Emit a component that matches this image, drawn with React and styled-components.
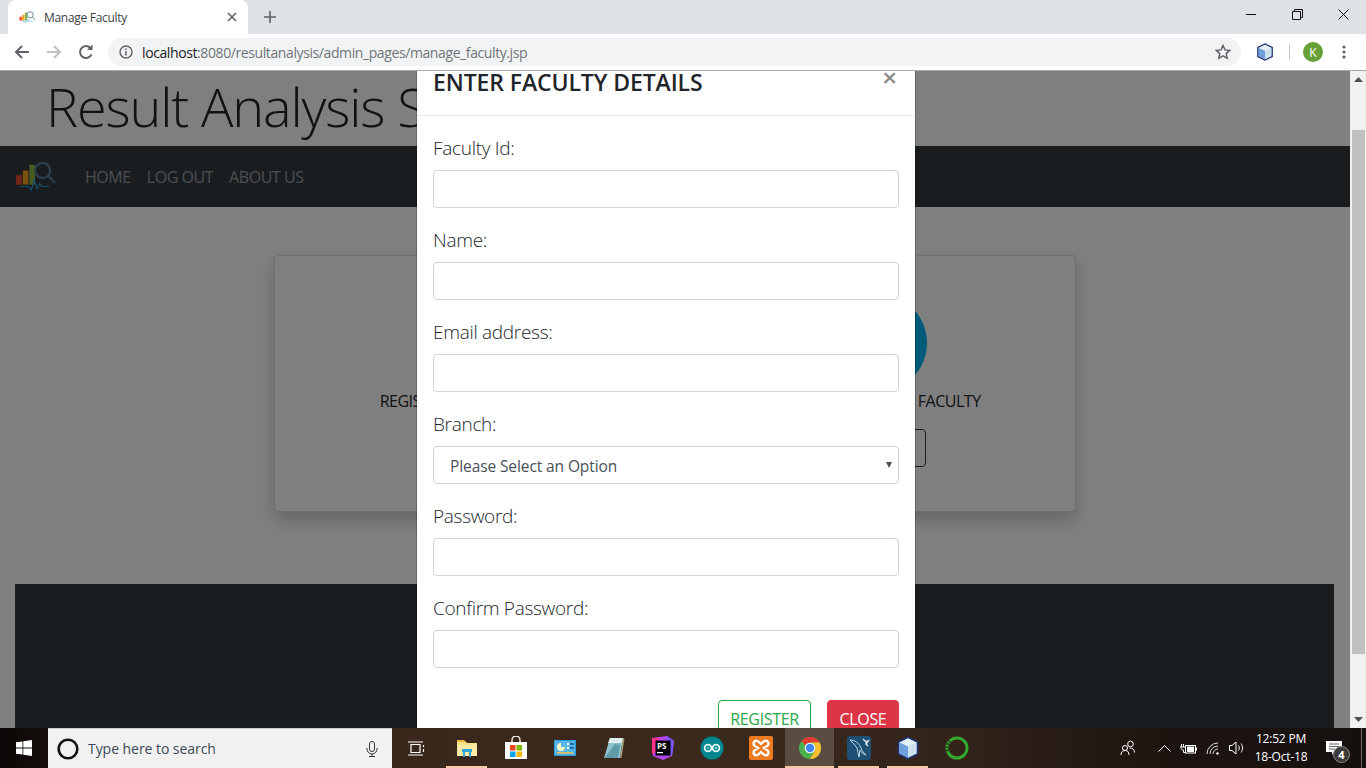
import React from 'react'
import styled, { createGlobalStyle } from 'styled-components'

const Global = createGlobalStyle`
  html, body { margin: 0; padding: 0; background: #fff; }
  * { box-sizing: border-box; }
  body { font-family: "Open Sans", "Noto Sans", sans-serif; overflow: hidden; }
`

const Screen = styled.div`
  width: 1366px;
  height: 768px;
  display: flex;
  flex-direction: column;
  overflow: hidden;
`

/* browser chrome */
const TabStrip = styled.div`
  height: 34px;
  flex: none;
  display: flex;
  align-items: flex-end;
  padding-left: 8px;
  background: #dee1e6;
`
const Tab = styled.div`
  width: 240px;
  height: 34px;
  display: flex;
  align-items: center;
  padding: 0 11px 0 11px;
  background: #fff;
  border-radius: 8px 8px 0 0;
`
const TabTitle = styled.span`
  flex: 1;
  margin-left: 8px;
  font-size: 12px;
  letter-spacing: -0.3px;
  color: #3c4043;
`
const NewTab = styled.div`
  width: 28px;
  height: 28px;
  margin: 0 0 3px 8px;
  display: flex;
  align-items: center;
  justify-content: center;
`
const WindowControls = styled.div`
  margin-left: auto;
  height: 34px;
  display: flex;
`
const WindowButton = styled.div`
  width: 46px;
  height: 29px;
  display: flex;
  align-items: center;
  justify-content: center;
`
const Toolbar = styled.div`
  height: 37px;
  flex: none;
  display: flex;
  align-items: center;
  background: #fff;
  border-bottom: 1px solid #a9a9a9;
  padding: 0 0 0 6px;
`
const NavButton = styled.div`
  width: 32px;
  height: 28px;
  display: flex;
  align-items: center;
  justify-content: center;
`
const Omnibox = styled.div`
  width: 1133px;
  height: 28px;
  margin-left: 6px;
  display: flex;
  align-items: center;
  padding: 0 10px 0 11px;
  background: #f1f3f4;
  border-radius: 14px;
`
const Url = styled.span`
  flex: 1;
  margin-left: 9px;
  font-size: 14px;
  letter-spacing: -0.4px;
  color: #70757a;
  b { font-weight: 400; color: #202124; }
`
const ToolbarIcon = styled.div`
  width: ${p => p.$w}px;
  height: 28px;
  display: flex;
  align-items: center;
  justify-content: center;
`
const ToolbarDivider = styled.div`
  width: 1px;
  height: 16px;
  background: #c8cacd;
`
const Avatar = styled.div`
  width: 20px;
  height: 20px;
  border-radius: 50%;
  background: #689f38;
  color: #fff;
  font-size: 12px;
  display: flex;
  align-items: center;
  justify-content: center;
`

/* page under the dialog */
const Viewport = styled.div`
  flex: 1;
  min-height: 0;
  position: relative;
  overflow: hidden;
  display: flex;
`
const Page = styled.div`
  flex: 1;
  display: flex;
  flex-direction: column;
  background: #fff;
`
const SiteTitle = styled.h1`
  height: 75px;
  flex: none;
  margin: 0;
  padding-left: 46px;
  font-size: 54px;
  line-height: 70px;
  font-weight: 300;
  letter-spacing: -1.15px;
  color: #212529;
  white-space: nowrap;
  overflow: hidden;
`
const SiteNav = styled.nav`
  height: 61px;
  flex: none;
  display: flex;
  align-items: center;
  padding-left: 15px;
  gap: 16px;
  background: #343a40;
`
const Logo = styled.div`
  width: 54px;
  display: flex;
`
const SiteLink = styled.a`
  font-size: 16px;
  letter-spacing: -0.45px;
  color: rgba(255, 255, 255, 0.5);
`
const Card = styled.div`
  width: 802px;
  height: 257px;
  flex: none;
  margin: 48px auto 72px;
  display: grid;
  grid-template-columns: 1fr 1fr;
  background: #fff;
  border: 1px solid rgba(0, 0, 0, 0.125);
  border-radius: 4px;
  box-shadow: 0 8px 16px rgba(0, 0, 0, 0.2);
`
const Action = styled.div`
  display: flex;
  flex-direction: column;
  align-items: center;
  padding-top: 38px;
`
const ActionCircle = styled.div`
  width: 98px;
  height: 98px;
  margin-left: 6px;
  border-radius: 50%;
  background: #00b5f5;
`
const ActionLabel = styled.div`
  margin: -1px 0 0 ${p => p.$shift}px;
  font-size: 16px;
  line-height: 20px;
  letter-spacing: -0.5px;
  color: #212529;
`
const ActionButton = styled.div`
  width: 102px;
  height: 38px;
  margin-top: 18px;
  border: 1px solid #343a40;
  border-radius: 4px;
`
const Footer = styled.footer`
  flex: 1;
  margin: 0 16px 0 15px;
  background: #343a40;
`

const Scrollbar = styled.div`
  width: 16px;
  flex: none;
  display: flex;
  flex-direction: column;
  align-items: center;
  background: #f1f1f1;
`
const ScrollArrow = styled.div`
  height: 17px;
  display: flex;
  align-items: center;
  justify-content: center;
`
const ScrollThumb = styled.div`
  width: 13px;
  height: 524px;
  margin-top: 42px;
  background: #c1c1c1;
`
const ScrollRest = styled.div`
  flex: 1;
`

/* dialog */
const Backdrop = styled.div`
  position: absolute;
  top: 0;
  left: 0;
  right: 16px;
  bottom: 0;
  background: rgba(0, 0, 0, 0.5);
`
const Dialog = styled.div`
  position: absolute;
  top: -25px;
  left: 416px;
  width: 500px;
  background: #fff;
  border: 1px solid rgba(0, 0, 0, 0.2);
  background-clip: padding-box;
  border-radius: 5px;
`
const DialogHeader = styled.div`
  height: 69px;
  position: relative;
  padding: 17px 16px 0;
  border-bottom: 1px solid #e9ecef;
`
const DialogTitle = styled.h4`
  margin: 0;
  font-size: 23px;
  line-height: 36px;
  font-weight: 600;
  letter-spacing: -0.1px;
  color: #212529;
`
const CloseX = styled.span`
  position: absolute;
  top: 16px;
  right: 18px;
  font-size: 26px;
  line-height: 28px;
  font-weight: 600;
  color: #8a8a8a;
`
const DialogBody = styled.div`
  padding: 16px;
`
const Field = styled.div`
  margin-bottom: 16px;
`
const FieldLabel = styled.label`
  display: block;
  height: 30px;
  margin-bottom: 8px;
  padding-top: 2px;
  font-size: 19px;
  line-height: 28px;
  font-weight: 300;
  letter-spacing: -0.3px;
  color: #212529;
`
const TextInput = styled.input`
  display: block;
  width: 100%;
  height: 38px;
  background: #fff;
  border: 1px solid #ced4da;
  border-radius: 4px;
`
const SelectWrap = styled.div`
  position: relative;
`
const Select = styled.select`
  display: block;
  width: 100%;
  height: 38px;
  padding: 2px 16px 0;
  appearance: none;
  background: #fff;
  border: 1px solid #ced4da;
  border-radius: 4px;
  font-family: inherit;
  font-size: 15.5px;
  letter-spacing: -0.1px;
  color: #495057;
`
const SelectArrow = styled.span`
  position: absolute;
  top: 16px;
  right: 7px;
  width: 0;
  height: 0;
  border-left: 3px solid transparent;
  border-right: 3px solid transparent;
  border-top: 6px solid #495057;
`
const DialogFooter = styled.div`
  display: flex;
  justify-content: flex-end;
  gap: 16px;
  padding: 0 16px 16px;
`
const FooterButton = styled.button`
  width: ${p => p.$w}px;
  height: 38px;
  padding: 0;
  font-family: inherit;
  font-size: 16px;
  letter-spacing: -0.35px;
  border-radius: 4px;
  border: 1px solid ${p => p.$color};
  background: ${p => (p.$solid ? p.$color : '#fff')};
  color: ${p => (p.$solid ? '#fff' : p.$color)};
`

/* windows taskbar */
const Taskbar = styled.div`
  height: 40px;
  flex: none;
  display: flex;
  background: linear-gradient(90deg, #0a0706 0, #17100c 48px, #38271a 400px, #3a291c 700px, #33241a 950px, #1e1511 1150px, #15100e 1366px);
`
const StartButton = styled.div`
  width: 48px;
  display: flex;
  align-items: center;
  justify-content: center;
`
const SearchBox = styled.div`
  width: 344px;
  display: flex;
  align-items: center;
  padding: 0 14px 0 9px;
  background: #f1f1f1;
  border-top: 1px solid #c9c9c9;
`
const SearchText = styled.span`
  flex: 1;
  margin-left: 9px;
  font-size: 14px;
  letter-spacing: -0.05px;
  color: #3b4a57;
`
const TaskItem = styled.div`
  width: ${p => p.$w || 49}px;
  position: relative;
  display: flex;
  align-items: center;
  justify-content: center;
  background: ${p => (p.$active ? '#5a4c41' : 'transparent')};
  &::after {
    content: '';
    display: ${p => (p.$running ? 'block' : 'none')};
    position: absolute;
    bottom: 0;
    left: ${p => (p.$active ? 0 : 4)}px;
    right: ${p => (p.$active ? 0 : 4)}px;
    height: 2px;
    background: #f4c9a8;
  }
`
const Tray = styled.div`
  margin-left: auto;
  display: flex;
  color: #fff;
`
const TrayIcon = styled.div`
  width: ${p => p.$w}px;
  margin-right: ${p => p.$gap || 0}px;
  display: flex;
  align-items: center;
  justify-content: center;
`
const Clock = styled.div`
  width: 50px;
  display: flex;
  flex-direction: column;
  align-items: center;
  justify-content: center;
  font-size: 12px;
  line-height: 18px;
  letter-spacing: -0.2px;
  white-space: nowrap;
`
const Notify = styled.div`
  width: 55px;
  position: relative;
  display: flex;
  align-items: center;
  justify-content: center;
`
const NotifyBadge = styled.span`
  position: absolute;
  top: 18px;
  left: 27px;
  width: 17px;
  height: 17px;
  border-radius: 50%;
  background: #3c3a38;
  border: 1px solid #8a8a8a;
  font-size: 11px;
  font-weight: 700;
  line-height: 15px;
  text-align: center;
`
const ShowDesktop = styled.div`
  width: 5px;
  border-left: 1px solid #6d6a68;
`

function SiteLogo({ size }) {
  return (
    <svg width={size} height={size * 0.72} viewBox="0 0 44 32" fill="none">
      <rect x="1" y="15" width="6" height="10" fill="#e84c2c" />
      <rect x="8" y="10" width="6" height="15" fill="#f2a01e" />
      <rect x="15" y="4" width="6" height="21" fill="#8cb63c" />
      <path d="M6 27h8l3 4 3-11 3 9 3-5 2 3h8" stroke="#2a9ed8" strokeWidth="1.200" />
      <circle cx="29" cy="10" r="8" stroke="#5a7f95" strokeWidth="2.400" />
      <path d="M35 16l7 7" stroke="#5a7f95" strokeWidth="2.400" />
    </svg>
  )
}

function CubeIcon({ size }) {
  return (
    <svg width={size} height={size} viewBox="0 0 20 20">
      <path d="M10 1l8 4v10l-8 4-8-4V5z" fill="#9cc4ea" stroke="#1f2f6b" strokeWidth="1.400" />
      <path d="M10 2l7 3.500-7 3.500-7-3.500z" fill="#e6f1f6" />
      <path d="M10 9v9l7-3.500V5.500z" fill="#cfe1ea" />
      <path d="M3 5.500L10 9v9l-7-3.500z" fill="#6f9fdc" />
    </svg>
  )
}

function Chrome({ size }) {
  return (
    <svg width={size} height={size} viewBox="0 0 24 24">
      <circle cx="12" cy="12" r="11" fill="#4caf50" />
      <path d="M12 1a11 11 0 0 1 9.530 5.500H12a5.500 5.500 0 0 0-4.760 2.750L3.500 4.900A11 11 0 0 1 12 1z" fill="#e53935" />
      <path d="M21.530 6.500A11 11 0 0 1 12 23l4.760-8.250A5.500 5.500 0 0 0 12 6.500z" fill="#fbc02d" />
      <circle cx="12" cy="12" r="5.300" fill="#fff" />
      <circle cx="12" cy="12" r="4.200" fill="#4285f4" />
    </svg>
  )
}

const taskIcons = [
  {
    key: 'explorer',
    running: true,
    icon: (
      <svg width="22" height="20" viewBox="0 0 22 20">
        <path d="M1 3h8l2 2h10v13H1z" fill="#fbe08c" />
        <path d="M1 2h7l2 2H1z" fill="#e8b93f" />
        <path d="M1 18V7h20v11z" fill="#fdeaa6" />
        <rect x="6" y="11" width="10" height="3" fill="#2ea5dc" />
        <path d="M7 14h2v5H7zM13 14h2v5h-2z" fill="#2ea5dc" />
      </svg>
    ),
  },
  {
    key: 'store',
    icon: (
      <svg width="24" height="24" viewBox="0 0 24 24">
        <path d="M8 6V4a4 4 0 0 1 8 0v2" stroke="#fff" strokeWidth="1.300" fill="none" />
        <path d="M1 6h22v17H1z" fill="#fff" />
        <rect x="6" y="9" width="5.500" height="5.500" fill="#e8481c" />
        <rect x="12.500" y="9" width="5.500" height="5.500" fill="#7fba00" />
        <rect x="6" y="15.500" width="5.500" height="5.500" fill="#00a4ef" />
        <rect x="12.500" y="15.500" width="5.500" height="5.500" fill="#ffb900" />
      </svg>
    ),
  },
  {
    key: 'panel',
    icon: (
      <svg width="22" height="18" viewBox="0 0 22 18">
        <rect x="0" y="1" width="22" height="16" fill="#2d9ad6" />
        <rect x="1" y="2" width="20" height="14" fill="#57b6e8" />
        <path d="M7 4a4 4 0 1 0 4 4H7z" fill="#fff4c4" />
        <rect x="13" y="4" width="2" height="2" fill="#fff" />
        <rect x="16" y="4" width="4" height="2" fill="#1d6fa8" />
        <rect x="13" y="8" width="2" height="2" fill="#fff" />
        <rect x="16" y="8" width="4" height="2" fill="#1d6fa8" />
        <rect x="3" y="13" width="16" height="1.500" fill="#f0c04a" />
      </svg>
    ),
  },
  {
    key: 'notepad',
    icon: (
      <svg width="24" height="24" viewBox="0 0 24 24">
        <path d="M8 2h13l-3 20H2z" fill="#8fc4cf" />
        <path d="M8 2h13l-1 5H6z" fill="#dfeef0" />
        <path d="M4 20L13 8l5 1-2 13H2z" fill="#5f9ba9" />
        <path d="M21 2l-3 20h1.500l3-19z" fill="#a89a70" />
      </svg>
    ),
  },
  {
    key: 'phpstorm',
    icon: (
      <svg width="24" height="24" viewBox="0 0 24 24">
        <path d="M1 2l15-2 7 5-2 15-9 4-10-4z" fill="#b345f1" />
        <path d="M16 0l7 5-2 15-5-6z" fill="#765af8" />
        <path d="M1 2l8 0-4 14-4 2z" fill="#ff318c" />
        <rect x="4.500" y="4.500" width="15" height="15" fill="#000" />
        <text x="6" y="12.500" fontSize="8" fontWeight="700" fill="#fff" fontFamily="Open Sans, sans-serif">PS</text>
        <rect x="6" y="16" width="6" height="1.200" fill="#fff" />
      </svg>
    ),
  },
  {
    key: 'arduino',
    icon: (
      <svg width="24" height="24" viewBox="0 0 24 24">
        <circle cx="12" cy="12" r="11.500" fill="#00878f" />
        <circle cx="8" cy="12" r="3.400" fill="none" stroke="#e8f6f6" strokeWidth="1.800" />
        <circle cx="16" cy="12" r="3.400" fill="none" stroke="#e8f6f6" strokeWidth="1.800" />
        <path d="M6.700 12h2.600M14.700 12h2.600M16 10.700v2.600" stroke="#e8f6f6" strokeWidth="0.800" />
      </svg>
    ),
  },
  {
    key: 'xampp',
    icon: (
      <svg width="24" height="24" viewBox="0 0 24 24">
        <rect width="24" height="24" rx="2" fill="#ec7a1e" />
        <path d="M6 5c3-1 4 1 6 3 2-2 3-4 6-3 2 1 2 4 0 5l-3 2 3 2c2 1 2 4 0 5-3 1-4-1-6-3-2 2-3 4-6 3-2-1-2-4 0-5l3-2-3-2c-2-1-2-4 0-5z" fill="none" stroke="#fff" strokeWidth="2.400" />
      </svg>
    ),
  },
  { key: 'chrome', running: true, active: true, icon: <Chrome size={24} /> },
  {
    key: 'mysql',
    running: true,
    icon: (
      <svg width="24" height="24" viewBox="0 0 24 24">
        <rect width="24" height="24" rx="3" fill="#1e4f74" />
        <path d="M3 4c5 0 9 3 11 8 1 3 3 5 5 7-3-1-5-3-6-5l-1 7c-1-3-1-6-2-9-2-3-4-5-7-8z" fill="none" stroke="#c4d8e6" strokeWidth="1" />
        <path d="M16 3l3 3 2-1-2 3 2 2" fill="none" stroke="#e6eef4" strokeWidth="1.400" />
      </svg>
    ),
  },
  { key: 'cube', running: true, icon: <CubeIcon size={24} /> },
  {
    key: 'ring',
    icon: (
      <svg width="24" height="24" viewBox="0 0 24 24">
        <circle cx="12" cy="12" r="10" fill="none" stroke="#35a82e" strokeWidth="3" />
        <path d="M5 5a10 10 0 0 0-2 10" fill="none" stroke="#2b3a22" strokeWidth="3" strokeDasharray="1.500 1.500" />
      </svg>
    ),
  },
]

const fields = ['Faculty Id:', 'Name:', 'Email address:', 'Branch:', 'Password:', 'Confirm Password:']

export default function App() {
  return (
    <Screen>
      <Global />
      <TabStrip>
        <Tab>
          <SiteLogo size={17} />
          <TabTitle>Manage Faculty</TabTitle>
          <svg width="10" height="10" viewBox="0 0 10 10">
            <path d="M1 1l8 8M9 1l-8 8" stroke="#5f6368" strokeWidth="1.600" />
          </svg>
        </Tab>
        <NewTab>
          <svg width="12" height="12" viewBox="0 0 12 12">
            <path d="M6 0v12M0 6h12" stroke="#5f6368" strokeWidth="1.600" />
          </svg>
        </NewTab>
        <WindowControls>
          <WindowButton>
            <svg width="11" height="11" viewBox="0 0 11 11"><path d="M0 5.500h10" stroke="#111" /></svg>
          </WindowButton>
          <WindowButton>
            <svg width="11" height="11" viewBox="0 0 11 11" fill="none">
              <path d="M0.500 2.500h8v8h-8zM2.500 2.500v-2h8v8h-2" stroke="#111" />
            </svg>
          </WindowButton>
          <WindowButton>
            <svg width="11" height="11" viewBox="0 0 11 11"><path d="M0.500 0.500l10 10M10.500 0.500l-10 10" stroke="#111" /></svg>
          </WindowButton>
        </WindowControls>
      </TabStrip>

      <Toolbar>
        <NavButton>
          <svg width="16" height="16" viewBox="0 0 16 16" fill="none">
            <path d="M15 8H2M8 2L2 8l6 6" stroke="#5f6368" strokeWidth="2" />
          </svg>
        </NavButton>
        <NavButton>
          <svg width="16" height="16" viewBox="0 0 16 16" fill="none">
            <path d="M1 8h13M8 2l6 6-6 6" stroke="#bdc1c6" strokeWidth="2" />
          </svg>
        </NavButton>
        <NavButton>
          <svg width="16" height="16" viewBox="0 0 16 16" fill="none">
            <path d="M13.500 10.500A6 6 0 1 1 12.500 4" stroke="#5f6368" strokeWidth="2" />
            <path d="M9 6h5.500V.5z" fill="#5f6368" />
          </svg>
        </NavButton>
        <Omnibox>
          <svg width="14" height="14" viewBox="0 0 14 14" fill="none">
            <circle cx="7" cy="7" r="6" stroke="#5f6368" strokeWidth="1.400" />
            <path d="M7 6v4.500M7 3.500v1.500" stroke="#5f6368" strokeWidth="1.500" />
          </svg>
          <Url><b>localhost</b>:8080/resultanalysis/admin_pages/manage_faculty.jsp</Url>
          <svg width="16" height="16" viewBox="0 0 16 16" fill="none">
            <path d="M8 1.500l2 4.400 4.700.5-3.500 3.200 1 4.700L8 11.900l-4.200 2.400 1-4.700L1.300 6.400 6 5.900z" stroke="#5f6368" strokeWidth="1.500" />
          </svg>
        </Omnibox>
        <ToolbarIcon $w={48}><CubeIcon size={18} /></ToolbarIcon>
        <ToolbarDivider />
        <ToolbarIcon $w={46}><Avatar>K</Avatar></ToolbarIcon>
        <ToolbarIcon $w={16}>
          <svg width="4" height="14" viewBox="0 0 4 14" fill="#5f6368">
            <circle cx="2" cy="2" r="1.600" /><circle cx="2" cy="7" r="1.600" /><circle cx="2" cy="12" r="1.600" />
          </svg>
        </ToolbarIcon>
      </Toolbar>

      <Viewport>
        <Page>
          <SiteTitle>Result Analysis System</SiteTitle>
          <SiteNav>
            <Logo><SiteLogo size={42} /></Logo>
            <SiteLink>HOME</SiteLink>
            <SiteLink>LOG OUT</SiteLink>
            <SiteLink>ABOUT US</SiteLink>
          </SiteNav>
          <Card>
            <Action>
              <ActionCircle />
              <ActionLabel $shift={-6}>REGISTER A NEW FACULTY</ActionLabel>
              <ActionButton />
            </Action>
            <Action>
              <ActionCircle />
              <ActionLabel $shift={6}>UPDATE OR DELETE FACULTY</ActionLabel>
              <ActionButton />
            </Action>
          </Card>
          <Footer />
        </Page>
        <Scrollbar>
          <ScrollArrow>
            <svg width="9" height="5" viewBox="0 0 9 5"><path d="M4.500 0l4.500 5H0z" fill="#505050" /></svg>
          </ScrollArrow>
          <ScrollThumb />
          <ScrollRest />
          <ScrollArrow>
            <svg width="9" height="5" viewBox="0 0 9 5"><path d="M4.500 5L9 0H0z" fill="#505050" /></svg>
          </ScrollArrow>
        </Scrollbar>
        <Backdrop />
        <Dialog>
          <DialogHeader>
            <DialogTitle>ENTER FACULTY DETAILS</DialogTitle>
            <CloseX>×</CloseX>
          </DialogHeader>
          <DialogBody>
            {fields.map(name => (
              <Field key={name}>
                <FieldLabel>{name}</FieldLabel>
                {name === 'Branch:' ? (
                  <SelectWrap>
                    <Select defaultValue="">
                      <option value="">Please Select an Option</option>
                    </Select>
                    <SelectArrow />
                  </SelectWrap>
                ) : (
                  <TextInput />
                )}
              </Field>
            ))}
          </DialogBody>
          <DialogFooter>
            <FooterButton $w={93} $color="#28a745">REGISTER</FooterButton>
            <FooterButton $w={72} $color="#dc3545" $solid>CLOSE</FooterButton>
          </DialogFooter>
        </Dialog>
      </Viewport>

      <Taskbar>
        <StartButton>
          <svg width="16" height="16" viewBox="0 0 16 16" fill="#fff">
            <path d="M0 2.300l6.500-.9v6.200H0zM7.300 1.300L16 0v7.600H7.300zM0 8.400h6.500v6.200L0 13.700zM7.300 8.400H16V16l-8.700-1.300z" />
          </svg>
        </StartButton>
        <SearchBox>
          <svg width="22" height="22" viewBox="0 0 22 22" fill="none">
            <circle cx="11" cy="11" r="9.300" stroke="#111" strokeWidth="2.600" />
          </svg>
          <SearchText>Type here to search</SearchText>
          <svg width="12" height="16" viewBox="0 0 12 16" fill="none" stroke="#333">
            <rect x="3.500" y="0.500" width="5" height="10" rx="2.500" />
            <path d="M1 7v1a5 5 0 0 0 10 0V7M6 13v2.500M3 15.500h6" />
          </svg>
        </SearchBox>
        <TaskItem $w={50}>
          <svg width="18" height="15" viewBox="0 0 18 15" fill="none" stroke="#fff" strokeWidth="1.200">
            <path d="M3 3.500h9v8H3zM0 1h15M0 14h15M15.500 4v2M15.500 8v3" />
          </svg>
        </TaskItem>
        {taskIcons.map(t => (
          <TaskItem key={t.key} $running={t.running} $active={t.active}>{t.icon}</TaskItem>
        ))}
        <Tray>
          <TrayIcon $w={32} $gap={8}>
            <svg width="16" height="16" viewBox="0 0 16 16" fill="none" stroke="#fff">
              <circle cx="10.500" cy="4" r="2.800" />
              <circle cx="5" cy="8" r="2.500" />
              <path d="M1 15c0-3 1.500-4.500 4-4.500s4 1.500 4 4.500M9.500 8c3 0 5 1.500 5 4.500" />
            </svg>
          </TrayIcon>
          <TrayIcon $w={24}>
            <svg width="13" height="7" viewBox="0 0 13 7" fill="none" stroke="#fff">
              <path d="M.5 6.500l6-6 6 6" />
            </svg>
          </TrayIcon>
          <TrayIcon $w={25}>
            <svg width="17" height="11" viewBox="0 0 17 11" fill="none" stroke="#fff">
              <rect x="5.500" y="2.500" width="10" height="7.500" />
              <rect x="7" y="3.500" width="7" height="5.500" fill="#fff" stroke="none" />
              <path d="M16.500 4.500v3M0 4h5M1.500 1v3M3.500 1v3M1 4.500c0 2 1 2.500 2.500 2.500v2.500h2" />
            </svg>
          </TrayIcon>
          <TrayIcon $w={24}>
            <svg width="14" height="13" viewBox="0 0 14 13" fill="none" stroke="#d9d9d9">
              <path d="M1 12A11 11 0 0 1 12 1" />
              <path d="M4 12a8 8 0 0 1 8-8" />
              <path d="M7 12a5 5 0 0 1 5-5" />
              <circle cx="11.500" cy="11.500" r="1.200" fill="#fff" stroke="none" />
            </svg>
          </TrayIcon>
          <TrayIcon $w={23} $gap={8}>
            <svg width="16" height="14" viewBox="0 0 16 14" fill="none" stroke="#fff">
              <path d="M.5 4.500h2.500L7 1v12L3 9.500H.5zM9.500 4.500c1 1.500 1 3.500 0 5M12 2.500c2 2.500 2 6.500 0 9" />
            </svg>
          </TrayIcon>
          <Clock>
            <span>12:52 PM</span>
            <span>18-Oct-18</span>
          </Clock>
          <Notify>
            <svg width="16" height="14" viewBox="0 0 16 14">
              <path d="M0 0h16v11H8l-2 3v-3H0z" fill="#fff" />
              <path d="M3 3h10M3 5.500h10M3 8h6" stroke="#3c3a38" strokeWidth="0.800" />
            </svg>
            <NotifyBadge>4</NotifyBadge>
          </Notify>
          <ShowDesktop />
        </Tray>
      </Taskbar>
    </Screen>
  )
}
